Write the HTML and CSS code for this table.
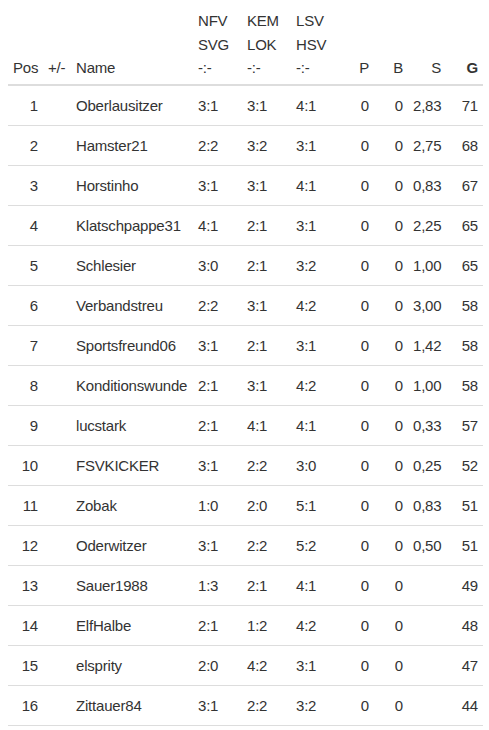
FILE: index.html
```html
<!DOCTYPE html>
<html lang="de">
<head>
<meta charset="utf-8">
<title>Tabelle</title>
<link rel="stylesheet" href="styles.css">
</head>
<body>
<table class="standings">
  <colgroup>
    <col class="c-pos"><col class="c-diff"><col class="c-name">
    <col class="c-tip"><col class="c-tip"><col class="c-tip">
    <col class="c-p"><col class="c-b"><col class="c-s"><col class="c-g">
  </colgroup>
  <thead>
    <tr>
      <th class="num">Pos</th>
      <th>+/-</th>
      <th>Name</th>
      <th>NFV<br>SVG<br>-:-</th>
      <th>KEM<br>LOK<br>-:-</th>
      <th>LSV<br>HSV<br>-:-</th>
      <th class="num">P</th>
      <th class="num">B</th>
      <th class="num">S</th>
      <th class="num bold">G</th>
    </tr>
  </thead>
  <tbody>
    <tr><td class="num">1</td><td></td><td>Oberlausitzer</td><td>3:1</td><td>3:1</td><td>4:1</td><td class="num">0</td><td class="num">0</td><td class="num">2,83</td><td class="num">71</td></tr>
    <tr><td class="num">2</td><td></td><td>Hamster21</td><td>2:2</td><td>3:2</td><td>3:1</td><td class="num">0</td><td class="num">0</td><td class="num">2,75</td><td class="num">68</td></tr>
    <tr><td class="num">3</td><td></td><td>Horstinho</td><td>3:1</td><td>3:1</td><td>4:1</td><td class="num">0</td><td class="num">0</td><td class="num">0,83</td><td class="num">67</td></tr>
    <tr><td class="num">4</td><td></td><td>Klatschpappe31</td><td>4:1</td><td>2:1</td><td>3:1</td><td class="num">0</td><td class="num">0</td><td class="num">2,25</td><td class="num">65</td></tr>
    <tr><td class="num">5</td><td></td><td>Schlesier</td><td>3:0</td><td>2:1</td><td>3:2</td><td class="num">0</td><td class="num">0</td><td class="num">1,00</td><td class="num">65</td></tr>
    <tr><td class="num">6</td><td></td><td>Verbandstreu</td><td>2:2</td><td>3:1</td><td>4:2</td><td class="num">0</td><td class="num">0</td><td class="num">3,00</td><td class="num">58</td></tr>
    <tr><td class="num">7</td><td></td><td>Sportsfreund06</td><td>3:1</td><td>2:1</td><td>3:1</td><td class="num">0</td><td class="num">0</td><td class="num">1,42</td><td class="num">58</td></tr>
    <tr><td class="num">8</td><td></td><td>Konditionswunde</td><td>2:1</td><td>3:1</td><td>4:2</td><td class="num">0</td><td class="num">0</td><td class="num">1,00</td><td class="num">58</td></tr>
    <tr><td class="num">9</td><td></td><td>lucstark</td><td>2:1</td><td>4:1</td><td>4:1</td><td class="num">0</td><td class="num">0</td><td class="num">0,33</td><td class="num">57</td></tr>
    <tr><td class="num">10</td><td></td><td>FSVKICKER</td><td>3:1</td><td>2:2</td><td>3:0</td><td class="num">0</td><td class="num">0</td><td class="num">0,25</td><td class="num">52</td></tr>
    <tr><td class="num">11</td><td></td><td>Zobak</td><td>1:0</td><td>2:0</td><td>5:1</td><td class="num">0</td><td class="num">0</td><td class="num">0,83</td><td class="num">51</td></tr>
    <tr><td class="num">12</td><td></td><td>Oderwitzer</td><td>3:1</td><td>2:2</td><td>5:2</td><td class="num">0</td><td class="num">0</td><td class="num">0,50</td><td class="num">51</td></tr>
    <tr><td class="num">13</td><td></td><td>Sauer1988</td><td>1:3</td><td>2:1</td><td>4:1</td><td class="num">0</td><td class="num">0</td><td class="num"></td><td class="num">49</td></tr>
    <tr><td class="num">14</td><td></td><td>ElfHalbe</td><td>2:1</td><td>1:2</td><td>4:2</td><td class="num">0</td><td class="num">0</td><td class="num"></td><td class="num">48</td></tr>
    <tr><td class="num">15</td><td></td><td>elsprity</td><td>2:0</td><td>4:2</td><td>3:1</td><td class="num">0</td><td class="num">0</td><td class="num"></td><td class="num">47</td></tr>
    <tr><td class="num">16</td><td></td><td>Zittauer84</td><td>3:1</td><td>2:2</td><td>3:2</td><td class="num">0</td><td class="num">0</td><td class="num"></td><td class="num">44</td></tr>
  </tbody>
</table>
</body>
</html>
```

FILE: styles.css
```css
html, body {
  margin: 0;
  padding: 0;
  background: #fff;
}
body {
  padding: 8px 0 0 8px;
  font-family: "Liberation Sans", Arial, sans-serif;
  font-size: 15px;
  letter-spacing: -0.2px;
  color: #333;
}
.standings {
  border-collapse: collapse;
  table-layout: fixed;
  width: 475px;
}
.c-pos { width: 35px; }
.c-diff { width: 28px; }
.c-name { width: 122px; }
.c-tip { width: 49px; }
.c-p { width: 34px; }
.c-b { width: 34px; }
.c-s { width: 38px; }
.c-g { width: 37px; }
.standings th {
  font-weight: normal;
  text-align: left;
  vertical-align: bottom;
  line-height: 23.5px;
  padding: 1px 5px 4.5px 5px;
  border-bottom: 2px solid #ddd;
  white-space: nowrap;
}
.standings td {
  line-height: 24px;
  padding: 7.5px 5px;
  border-bottom: 1px solid #ddd;
  white-space: nowrap;
  overflow: hidden;
}
.standings .num {
  text-align: right;
}
.standings th.bold {
  font-weight: bold;
}
```
